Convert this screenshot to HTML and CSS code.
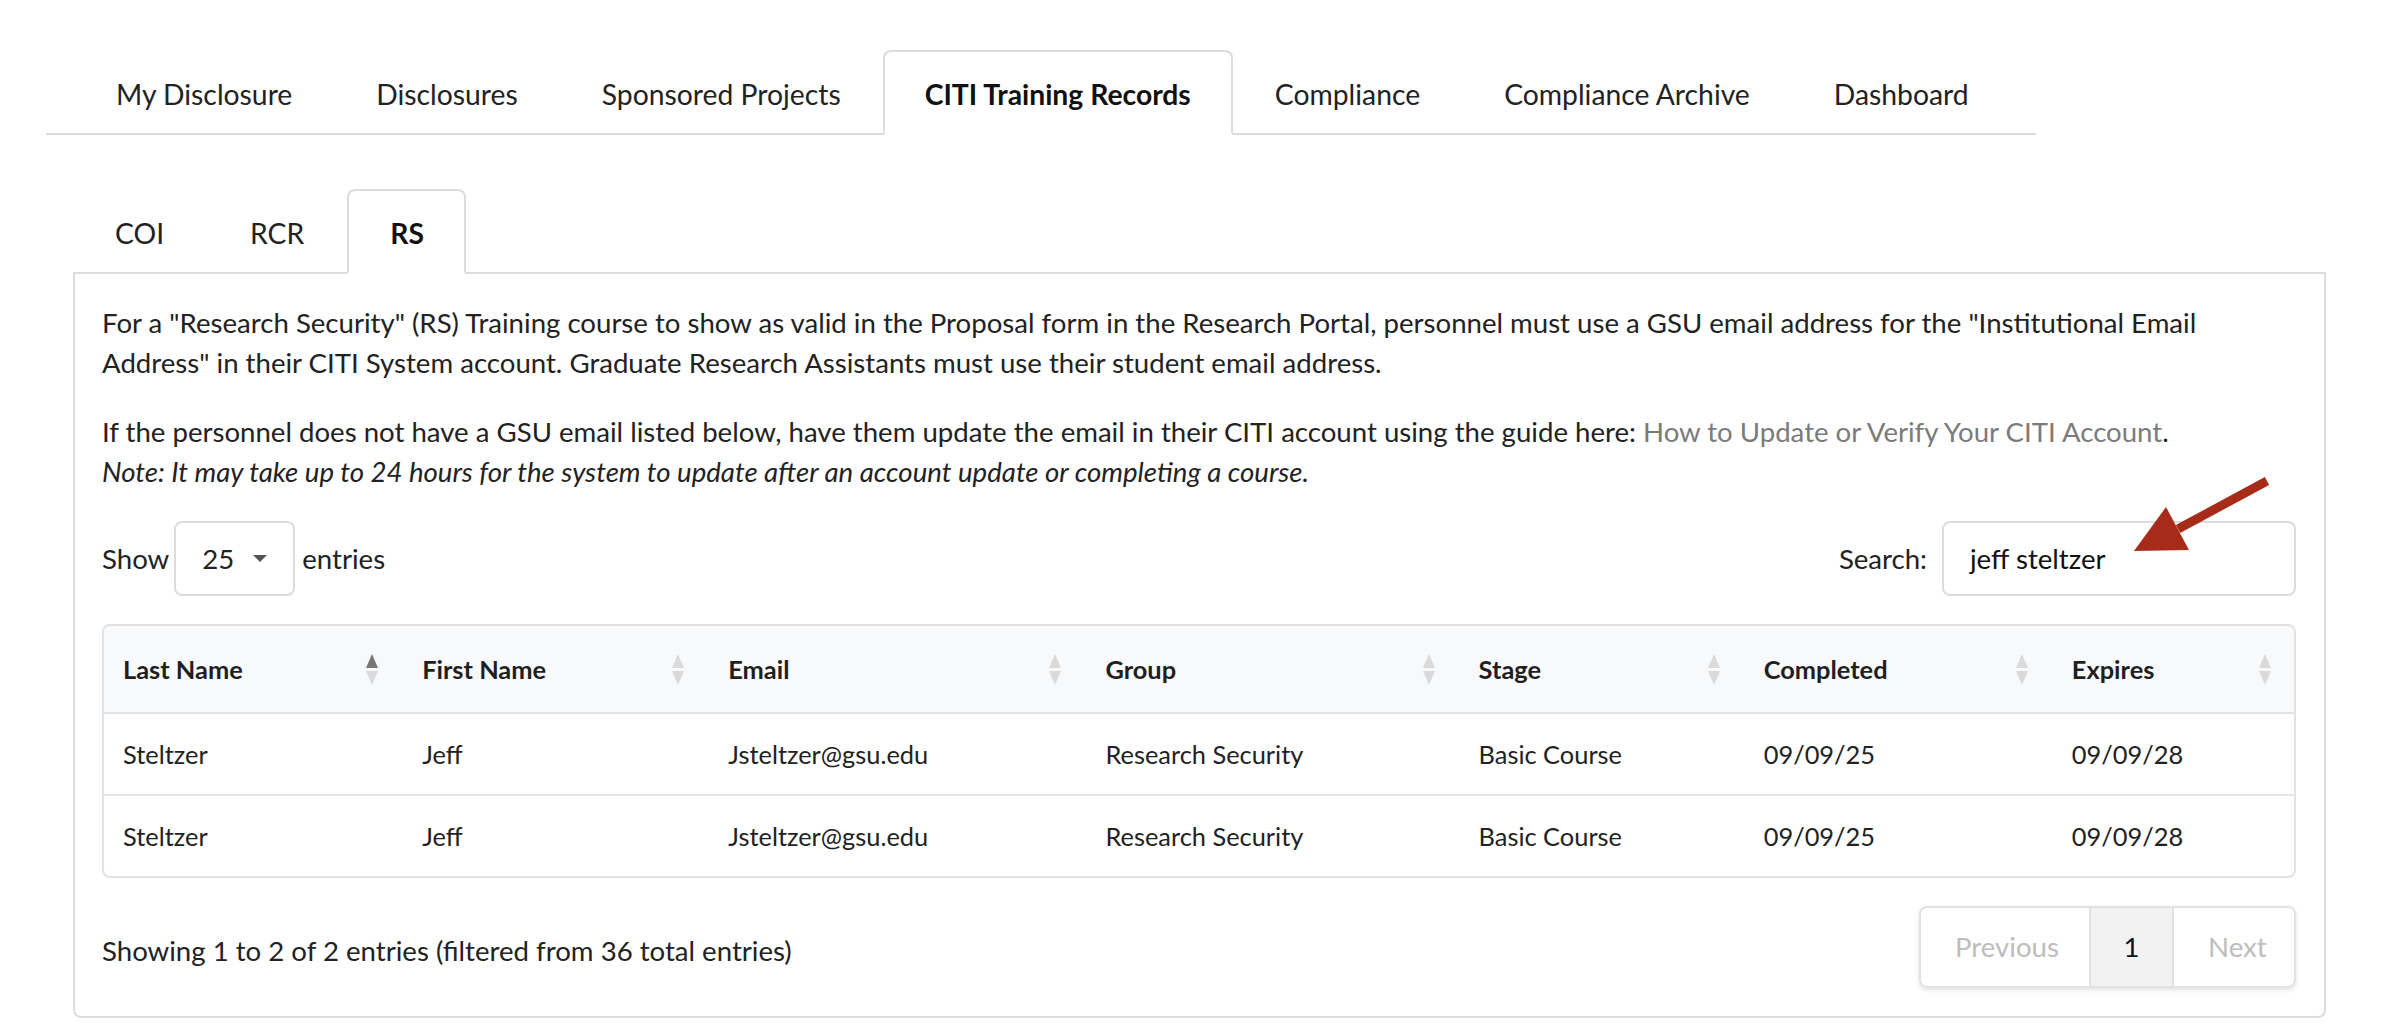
FILE: index.html
```html
<!DOCTYPE html>
<html>
<head>
    <meta charset="UTF-8">
    <meta name="viewport" content="width=device-width, initial-scale=1.0">
    <title>CITI Training Records</title>
    <link rel="stylesheet" href="styles.css">
</head>
<body>
    <div class="page">
        <!-- Main navigation tabs -->
        <ul class="main-tabs">
            <li class="tab">My Disclosure</li>
            <li class="tab">Disclosures</li>
            <li class="tab">Sponsored Projects</li>
            <li class="tab active">CITI Training Records</li>
            <li class="tab">Compliance</li>
            <li class="tab">Compliance Archive</li>
            <li class="tab">Dashboard</li>
        </ul>

        <div class="records">
            <ul class="sub-tabs">
                <li class="tab">COI</li>
                <li class="tab">RCR</li>
                <li class="tab active">RS</li>
            </ul>

            <div class="panel">
                <p>For a "Research Security" (RS) Training course to show as valid in the Proposal form in the Research Portal, personnel must use a GSU email address for the "Institutional Email Address" in their CITI System account. Graduate Research Assistants must use their student email address.</p>
                <p>If the personnel does not have a GSU email listed below, have them update the email in their CITI account using the guide here: <a href="#" class="guide-link">How to Update or Verify Your CITI Account</a>.<br>
                <em>Note: It may take up to 24 hours for the system to update after an account update or completing a course.</em></p>

                <div class="controls">
                    <div class="length">
                        Show
                        <div class="select">25 <span class="caret"></span></div>
                        entries
                    </div>
                    <div class="search">
                        Search:
                        <div class="search-box">jeff steltzer</div>
                    </div>
                </div>

                <div class="table-wrap">
                    <table class="records-table">
                        <colgroup>
                            <col style="width: 297px">
                            <col style="width: 306px">
                            <col style="width: 377px">
                            <col style="width: 373px">
                            <col style="width: 285px">
                            <col style="width: 308px">
                            <col style="width: 243px">
                        </colgroup>
                        <thead>
                            <tr>
                                <th><div class="th-inner">Last Name <span class="sort sorted"></span></div></th>
                                <th><div class="th-inner">First Name <span class="sort"></span></div></th>
                                <th><div class="th-inner">Email <span class="sort"></span></div></th>
                                <th><div class="th-inner">Group <span class="sort"></span></div></th>
                                <th><div class="th-inner">Stage <span class="sort"></span></div></th>
                                <th><div class="th-inner">Completed <span class="sort"></span></div></th>
                                <th><div class="th-inner">Expires <span class="sort"></span></div></th>
                            </tr>
                        </thead>
                        <tbody>
                            <tr>
                                <td>Steltzer</td>
                                <td>Jeff</td>
                                <td>Jsteltzer@gsu.edu</td>
                                <td>Research Security</td>
                                <td>Basic Course</td>
                                <td>09/09/25</td>
                                <td>09/09/28</td>
                            </tr>
                            <tr>
                                <td>Steltzer</td>
                                <td>Jeff</td>
                                <td>Jsteltzer@gsu.edu</td>
                                <td>Research Security</td>
                                <td>Basic Course</td>
                                <td>09/09/25</td>
                                <td>09/09/28</td>
                            </tr>
                        </tbody>
                    </table>
                </div>

                <div class="table-footer">
                    <div class="info">Showing 1 to 2 of 2 entries (filtered from 36 total entries)</div>
                    <div class="pagination">
                        <span class="page-btn disabled prev">Previous</span>
                        <span class="page-btn current">1</span>
                        <span class="page-btn disabled next">Next</span>
                    </div>
                </div>
            </div>
        </div>

        <!-- Annotation arrow pointing at the search box -->
        <svg class="arrow" width="160" height="100" viewBox="0 0 160 100">
            <line x1="147" y1="21" x2="58" y2="69" stroke="#a62b19" stroke-width="9"/>
            <polygon points="46,47 69,90 14,91" fill="#a62b19"/>
        </svg>
    </div>
</body>
</html>
```

FILE: styles.css
```css
body {
    margin: 0;
    padding: 0;
    background-color: #fff;
    font-family: Lato, "Open Sans", Arial, sans-serif;
    font-size: 27.6px;
    line-height: 40px;
    color: #222;
}
.page {
    position: relative;
    padding: 50px 0 0 46px;
}
ul {
    list-style: none;
    margin: 0;
    padding: 0;
}
.main-tabs,
.sub-tabs {
    display: flex;
    border-bottom: 2px solid #dcdcdc;
    font-size: 28.3px;
}
.main-tabs {
    width: 1962px;
    padding-left: 28px;
}
.tab {
    height: 79px;
    padding: 2px 40px 0 40px;
    margin-bottom: -2px;
    border: 2px solid transparent;
    border-radius: 8px 8px 0 0;
    display: flex;
    align-items: center;
    color: #222;
}
.sub-tabs .tab {
    padding-right: 41px;
}
.sub-tabs .tab + .tab {
    padding-left: 41px;
}
.sub-tabs .tab.active {
    padding-right: 40px;
}
.tab.active {
    font-weight: bold;
    color: #111;
    background-color: #fff;
    border-color: #dcdcdc;
    border-bottom-color: #fff;
}
.records {
    width: 2253px;
    margin: 54px 0 0 27px;
}
.panel {
    border: 2px solid #dcdcdc;
    border-top: none;
    border-radius: 0 0 8px 8px;
    padding: 29px 28px 28px 27px;
}
.panel p {
    margin: 0 0 29px 0;
}
.guide-link {
    color: #7b7b7b;
    text-decoration: none;
}
.controls {
    display: flex;
    justify-content: space-between;
    align-items: center;
    margin-top: 24px;
}
.length,
.search {
    display: flex;
    align-items: center;
}
.select {
    width: 91px;
    height: 71px;
    margin: 0 7px 0 5px;
    padding-left: 26px;
    border: 2px solid #dcdcdc;
    border-radius: 8px;
    display: flex;
    align-items: center;
}
.caret {
    display: inline-block;
    margin-left: 19px;
    width: 0;
    height: 0;
    border-left: 7px solid transparent;
    border-right: 7px solid transparent;
    border-top: 7px solid #555;
}
.search-box {
    width: 324px;
    height: 71px;
    margin-left: 15px;
    padding-left: 26px;
    border: 2px solid #dcdcdc;
    border-radius: 8px;
    display: flex;
    align-items: center;
    color: #111;
}
.table-wrap {
    margin-top: 28px;
    border: 2px solid #e2e2e2;
    border-radius: 8px;
    overflow: hidden;
}
.records-table {
    width: 100%;
    border-collapse: collapse;
    table-layout: fixed;
    font-size: 25.4px;
}
.records-table th {
    background-color: #f8f9fa;
    height: 86px;
    padding: 0 22px 0 21px;
    text-align: left;
    font-weight: bold;
    color: #1f1f1f;
    border-bottom: 2px solid #e2e2e2;
}
.records-table td {
    height: 80px;
    padding: 0 22px 0 21px;
    border-bottom: 2px solid #e6e6e6;
}
.records-table tbody tr:last-child td {
    border-bottom: none;
}
.records-table th:first-child,
.records-table td:first-child {
    padding-left: 19px;
}
.th-inner {
    display: flex;
    justify-content: space-between;
    align-items: center;
}
.sort {
    display: inline-flex;
    flex-direction: column;
    align-items: center;
    width: 14px;
}
.sort::before,
.sort::after {
    content: "";
    width: 0;
    height: 0;
    border-left: 6px solid transparent;
    border-right: 6px solid transparent;
}
.sort::before {
    border-bottom: 14px solid #dadada;
    margin-bottom: 3px;
}
.sort::after {
    border-top: 14px solid #dadada;
}
.sort.sorted::before {
    border-bottom-color: #777;
}
.table-footer {
    display: flex;
    justify-content: space-between;
    align-items: flex-start;
    margin-top: 28px;
}
.info {
    padding-top: 25px;
}
.pagination {
    display: flex;
    height: 78px;
    border: 2px solid #e2e2e2;
    border-radius: 8px;
    overflow: hidden;
    box-shadow: 0 2px 4px rgba(0, 0, 0, 0.12);
}
.page-btn {
    display: flex;
    align-items: center;
}
.page-btn.disabled {
    color: #bdbdbd;
}
.prev {
    width: 134px;
    padding-left: 34px;
}
.current {
    width: 81px;
    justify-content: center;
    background-color: #f2f2f2;
    color: #111;
    border-left: 2px solid #e2e2e2;
    border-right: 2px solid #e2e2e2;
}
.next {
    width: 86px;
    padding-left: 34px;
}
.arrow {
    position: absolute;
    left: 2120px;
    top: 460px;
}
```
